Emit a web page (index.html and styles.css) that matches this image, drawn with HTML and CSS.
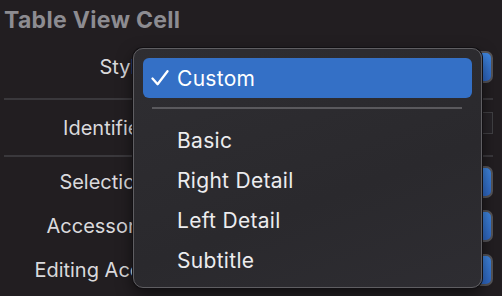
FILE: index.html
```html
<!DOCTYPE html>
<html lang="en">
<head>
    <meta charset="UTF-8">
    <title>Table View Cell Inspector</title>
    <link rel="stylesheet" href="styles.css">
</head>
<body>
    <div class="inspector">
        <h2 class="section-title">Table View Cell</h2>

        <div class="row row-style">
            <span class="label">Style</span>
            <div class="popup"></div>
        </div>
        <hr class="divider">

        <div class="row row-identifier">
            <span class="label">Identifier</span>
            <div class="field"></div>
        </div>
        <hr class="divider divider-low">

        <div class="row row-selection">
            <span class="label">Selection</span>
            <div class="popup"></div>
        </div>
        <div class="row">
            <span class="label">Accessory</span>
            <div class="popup"></div>
        </div>
        <div class="row">
            <span class="label">Editing Acc.</span>
            <div class="popup"></div>
        </div>
    </div>

    <!-- Style popup menu, open over the inspector -->
    <div class="menu">
        <div class="menu-item selected">
            <svg class="check" width="18" height="16" viewBox="0 0 18 16">
                <path d="M1.5 8.5 L6.6 14.2 L16.5 1.2" fill="none" stroke="#fff" stroke-width="2.3" stroke-linecap="round" stroke-linejoin="round"/>
            </svg>
            <span>Custom</span>
        </div>
        <div class="menu-separator"></div>
        <div class="menu-item"><span>Basic</span></div>
        <div class="menu-item"><span>Right Detail</span></div>
        <div class="menu-item"><span>Left Detail</span></div>
        <div class="menu-item"><span>Subtitle</span></div>
    </div>
</body>
</html>
```

FILE: styles.css
```css
:root {
    --bg-color: #221e21;
    --label-color: #dad9dc;
    --title-color: #8d8c91;
    --line-color: #3a383c;
    --menu-bg: #2d2c30;
    --menu-text: #ececee;
    --accent: #3470c6;
}

* {
    margin: 0;
    padding: 0;
    box-sizing: border-box;
}

body {
    font-family: Inter, "Noto Sans", sans-serif;
    background-color: var(--bg-color);
    width: 502px;
    height: 296px;
    overflow: hidden;
    position: relative;
}

.inspector {
    padding: 0 9px 0 4px;
}

.section-title {
    font-size: 23px;
    font-weight: 700;
    letter-spacing: 0.3px;
    color: var(--title-color);
    line-height: 26px;
    padding-top: 7px;
}

.row {
    display: flex;
    align-items: center;
    gap: 12px;
    height: 32px;
    margin-top: 12px;
}

.row-style {
    margin-top: 18px;
}

.row-identifier {
    margin-top: 12px;
}

.row-selection {
    margin-top: 9px;
}

.label {
    width: 143px;
    flex-shrink: 0;
    text-align: right;
    font-size: 20px;
    color: var(--label-color);
}

.popup {
    flex: 1;
    height: 32px;
    border-radius: 7px;
    border: 2px solid #565559;
    background: linear-gradient(#3f86e0, #2f68c4);
}

.field {
    flex: 1;
    align-self: flex-start;
    height: 22px;
    border: 1px solid #414044;
    background-color: #262327;
}

.divider {
    border: none;
    height: 2px;
    background-color: var(--line-color);
    margin-top: 15px;
}

.divider-low {
    margin-top: 11px;
}

.menu {
    position: absolute;
    left: 133px;
    top: 48px;
    width: 349px;
    height: 240px;
    padding: 9px;
    border-radius: 10px;
    border: 1px solid #5f5e62;
    background: linear-gradient(160deg, #2f2e32, #2a292d 60%, #2e2d32);
    box-shadow: 0 0 0 1px #121013, 0 6px 16px rgba(0, 0, 0, 0.55);
}

.menu-item {
    display: flex;
    align-items: center;
    height: 40px;
    padding-left: 34px;
    font-size: 21px;
    letter-spacing: 0.3px;
    color: var(--menu-text);
    border-radius: 6px;
}

.menu-item.selected {
    padding-left: 8px;
    gap: 8px;
    background-color: var(--accent);
    color: #fff;
}

.check {
    display: block;
}

.menu-separator {
    height: 2px;
    margin: 9px 10px 11px 9px;
    background-color: #5a595d;
}
```
